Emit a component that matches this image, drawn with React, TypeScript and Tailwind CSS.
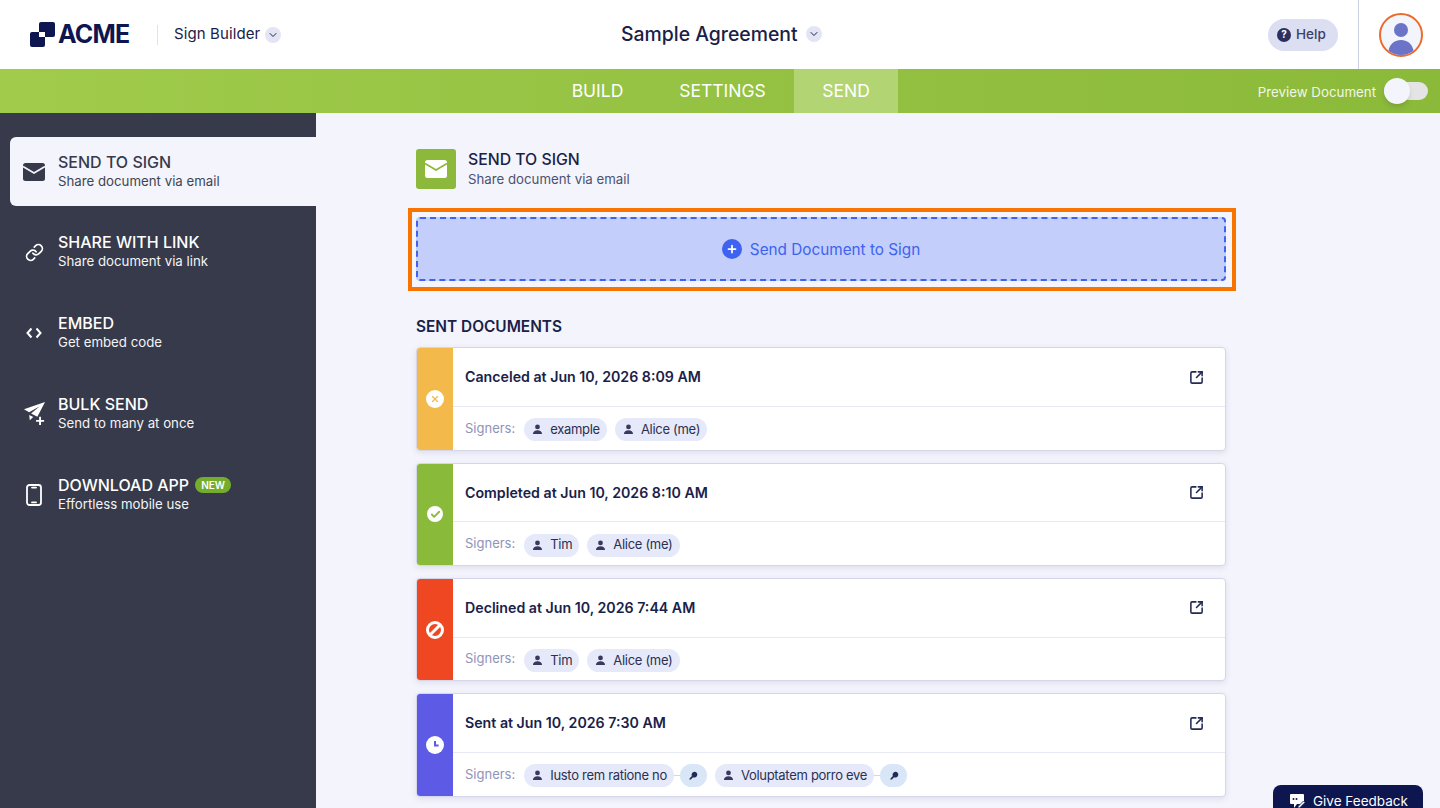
import { SquareArrowOutUpRight, Link as LinkIcon, ChevronDown, Check, X, Plus } from "lucide-react";
import type { ReactNode } from "react";

const font = { fontFamily: "Inter, 'Noto Sans', sans-serif" };

function MailIcon({ className, notch }: { className?: string; notch: string }) {
  return (
    <svg viewBox="0 0 22 18" className={className} preserveAspectRatio="none">
      <rect width="22" height="18" rx="2.5" fill="currentColor" />
      <path d="M0 3.5l11 6.5L22 3.5" fill="none" stroke={notch} strokeWidth="1.7" />
    </svg>
  );
}

function PlaneIcon({ className }: { className?: string }) {
  return (
    <svg viewBox="0 0 24 26" className={className} fill="currentColor">
      <path d="M23 1L1 8.5l5.4 3.2L17.5 5.5 8.4 13l6.6 3.4z" />
      <path d="M6.5 14.5l.6 5.5 3.6-3.4z" />
      <path d="M16.8 16.5h2v3.2H22v2h-3.2V25h-2v-3.3h-3.2v-2h3.2z" />
    </svg>
  );
}

function PhoneIcon({ className }: { className?: string }) {
  return (
    <svg viewBox="0 0 16 22" className={className} fill="none" stroke="currentColor" strokeWidth="1.8">
      <rect x="1" y="1" width="14" height="20" rx="2.5" />
      <path d="M6 3.6h4M6 18.4h4" strokeLinecap="round" />
    </svg>
  );
}

function PersonIcon() {
  return (
    <svg viewBox="0 0 12 12" className="h-[11px] w-[11px] shrink-0 text-[#363a5e]" fill="currentColor">
      <circle cx="6" cy="3.2" r="2.6" />
      <path d="M1 11c0-2.8 2.2-4.2 5-4.2s5 1.4 5 4.2z" />
    </svg>
  );
}

function KeyIcon() {
  return (
    <svg viewBox="0 0 12 12" className="h-[10px] w-[10px] text-[#232a55]" fill="currentColor">
      <path d="M7.6 1a3.4 3.4 0 1 1-1.5 6.4L3.4 10.2 1.8 10.4l.2-1.6 2.7-2.9A3.4 3.4 0 0 1 7.6 1z" />
    </svg>
  );
}

const sideItems: { title: string; sub: string; icon: ReactNode; badge?: boolean; active?: boolean }[] = [
  { title: "SEND TO SIGN", sub: "Share document via email", icon: <MailIcon className="h-[18px] w-[22px] text-[#363a4a]" notch="#f3f4fc" />, active: true },
  { title: "SHARE WITH LINK", sub: "Share document via link", icon: <LinkIcon className="h-[19px] w-[19px]" strokeWidth={2.2} /> },
  {
    title: "EMBED",
    sub: "Get embed code",
    icon: (
      <svg viewBox="0 0 16 12" className="h-3 w-4" fill="none" stroke="currentColor" strokeWidth="2">
        <path d="M5.5 1.5L1.5 6l4 4.5M10.5 1.5l4 4.5-4 4.5" />
      </svg>
    ),
  },
  { title: "BULK SEND", sub: "Send to many at once", icon: <PlaneIcon className="h-[25px] w-[23px]" /> },
  { title: "DOWNLOAD APP", sub: "Effortless mobile use", icon: <PhoneIcon className="h-[22px] w-4" />, badge: true },
];

type Signer = { name: string; key?: boolean };

const docs: { title: string; bar: string; icon: ReactNode; signers: Signer[] }[] = [
  {
    title: "Canceled at Jun 10, 2026 8:09 AM",
    bar: "bg-[#f4b94b]",
    icon: (
      <span className="flex h-[18px] w-[18px] items-center justify-center rounded-full bg-white">
        <X className="h-[10px] w-[10px] text-[#f4b94b]" strokeWidth={3} />
      </span>
    ),
    signers: [{ name: "example" }, { name: "Alice (me)" }],
  },
  {
    title: "Completed at Jun 10, 2026 8:10 AM",
    bar: "bg-[#8aba39]",
    icon: (
      <span className="flex h-4 w-4 items-center justify-center rounded-full bg-white">
        <Check className="h-[11px] w-[11px] text-[#8aba39]" strokeWidth={4} />
      </span>
    ),
    signers: [{ name: "Tim" }, { name: "Alice (me)" }],
  },
  {
    title: "Declined at Jun 10, 2026 7:44 AM",
    bar: "bg-[#f04723]",
    icon: (
      <svg viewBox="0 0 18 18" className="h-[18px] w-[18px]" fill="none" stroke="white" strokeWidth="3">
        <circle cx="9" cy="9" r="7.5" />
        <path d="M14 4L4 14" />
      </svg>
    ),
    signers: [{ name: "Tim" }, { name: "Alice (me)" }],
  },
  {
    title: "Sent at Jun 10, 2026 7:30 AM",
    bar: "bg-[#5d5be6]",
    icon: (
      <svg viewBox="0 0 18 18" className="h-[18px] w-[18px]">
        <circle cx="9" cy="9" r="9" fill="white" />
        <path d="M9 5v4.6h3.6" fill="none" stroke="#5d5be6" strokeWidth="2" />
      </svg>
    ),
    signers: [
      { name: "Iusto rem ratione no", key: true },
      { name: "Voluptatem porro eve", key: true },
    ],
  },
];

function SignerChip({ signer }: { signer: Signer }) {
  return (
    <div className="flex items-center">
      <span className="flex h-[23px] items-center gap-[7px] rounded-full bg-[#e6e9fa] pl-[8px] pr-[7px] text-[13px] tracking-[-0.3px] text-[#2a3050]">
        <PersonIcon />
        {signer.name}
      </span>
      {signer.key && (
        <>
          <span className="h-px w-[6px] bg-[#cfd8ee]" />
          <span className="flex h-[23px] w-[27px] items-center justify-center rounded-full bg-[#d8e6f7]">
            <KeyIcon />
          </span>
        </>
      )}
    </div>
  );
}

export default function App() {
  return (
    <div style={font} className="relative flex h-[808px] w-[1440px] flex-col overflow-hidden bg-[#f3f4fc] text-[#1a2148]">
      <header className="flex h-[69px] shrink-0 items-center bg-white">
        <div className="flex w-[621px] shrink-0 items-center pl-[30px]">
          <div className="flex w-[127px] items-center">
            <svg viewBox="0 0 25 25" className="h-[25px] w-[25px] shrink-0">
              <rect x="0" y="10" width="15" height="15" rx="2" fill="#0e1650" />
              <rect x="9" y="0" width="16" height="15" rx="2" fill="#0e1650" />
              <rect x="9" y="10" width="6" height="5" fill="white" />
            </svg>
            <span className="ml-[3px] text-[25px] font-bold leading-none tracking-[-0.8px] text-[#0e1650]">ACME</span>
          </div>
          <span className="h-5 w-px bg-[#e0e2f0]" />
          <span className="ml-4 text-[15px] tracking-[0.1px]">Sign Builder</span>
          <span className="ml-[5px] flex h-4 w-4 items-center justify-center rounded-full bg-[#e3e5f5]">
            <ChevronDown className="h-3 w-3" />
          </span>
        </div>
        <div className="flex items-center gap-2">
          <span className="text-[19.4px] font-medium">Sample Agreement</span>
          <span className="flex h-4 w-4 items-center justify-center rounded-full bg-[#e3e5f5]">
            <ChevronDown className="h-3 w-3" />
          </span>
        </div>
        <div className="flex h-full flex-1 items-center justify-end">
          <span className="flex h-8 w-[70px] items-center gap-[5px] rounded-full bg-[#dcdff2] pl-[9px] text-[13.5px] font-medium text-[#3b4068]">
            <span className="flex h-[14px] w-[14px] items-center justify-center rounded-full bg-[#2b3060] text-[10px] font-bold text-white">?</span>
            Help
          </span>
          <span className="ml-5 h-full w-px bg-[#ccd0e6]" />
          <div className="ml-5 mr-[17px] flex h-[44px] w-[44px] items-end justify-center overflow-hidden rounded-full border-2 border-[#ec6a2c] bg-[#f3f5fd]">
            <svg viewBox="0 0 40 40" className="h-[40px] w-[40px]" fill="#6b74c6">
              <circle cx="20" cy="15" r="7" />
              <path d="M7 40c0-10 6-15 13-15s13 5 13 15z" />
            </svg>
          </div>
        </div>
      </header>

      <nav className="flex h-11 shrink-0 bg-gradient-to-r from-[#a0cb4b] to-[#8bb93a] text-white">
        <div className="w-[544px] shrink-0" />
        <div className="flex text-[17.5px]">
          <span className="flex w-[107px] items-center justify-center">BUILD</span>
          <span className="flex w-[143px] items-center justify-center">SETTINGS</span>
          <span className="flex w-[104px] items-center justify-center bg-[#b2d472]">SEND</span>
        </div>
        <div className="flex flex-1 items-center justify-end pr-3">
          <span className="mr-2 mt-[3px] text-[13.3px] text-[#f3f6e6]">Preview Document</span>
          <span className="relative h-[18px] w-11 rounded-full bg-[#e4e4e4]">
            <span className="absolute -top-1 left-0 h-[26px] w-[26px] rounded-full bg-[#f3f4fc] shadow-md" />
          </span>
        </div>
      </nav>

      <div className="flex min-h-0 flex-1">
        <aside className="flex w-[316px] shrink-0 flex-col gap-[11.75px] bg-[#363a4a] pl-[10px] pt-6 text-white">
          {sideItems.map((item) => (
            <div
              key={item.title}
              className={
                item.active
                  ? "flex h-[69px] items-center rounded-l-md bg-[#f3f4fc] text-[#363a4a]"
                  : "flex h-[69px] items-center"
              }
            >
              <span className="flex w-[48px] justify-center">{item.icon}</span>
              <div className="pb-[1px]">
                <div className="flex items-center gap-[6px] text-[16px] font-medium leading-5">
                  {item.title}
                  {item.badge && (
                    <span className="flex h-4 w-9 items-center justify-center rounded-full bg-[#74ad2d] text-[10px] font-semibold">NEW</span>
                  )}
                </div>
                <div className="text-[13.25px] leading-[19px] opacity-95">{item.sub}</div>
              </div>
            </div>
          ))}
        </aside>

        <main className="min-w-0 flex-1 pl-[100px] pt-9">
          <div className="flex items-center gap-3">
            <span className="flex h-10 w-10 items-center justify-center rounded-[3px] bg-[#8cb83b]">
              <MailIcon className="h-[18px] w-[22px] text-white" notch="#8cb83b" />
            </span>
            <div>
              <div className="text-[15.8px] font-medium leading-5">SEND TO SIGN</div>
              <div className="text-[13.25px] leading-[19px] text-[#4c5170]">Share document via email</div>
            </div>
          </div>

          <div className="-ml-2 mt-[19px] w-[828px] border-4 border-[#f97300] pb-[6px] pl-1 pr-[6px] pt-[5px]">
            <button
              type="button"
              className="flex h-16 w-[810px] items-center justify-center gap-2 rounded border-2 border-dashed border-[#3d63f0] bg-[#c3cefa] text-[15.3px] text-[#3d63f0]"
            >
              <span className="flex h-5 w-5 items-center justify-center rounded-full bg-[#3d63f0]">
                <Plus className="h-3 w-3 text-white" strokeWidth={3.5} />
              </span>
              <span className="pt-[2px]">Send Document to Sign</span>
            </button>
          </div>

          <h2 className="mt-[26px] text-[15.4px] font-semibold leading-5">SENT DOCUMENTS</h2>

          <div className="mt-[10.3px] flex w-[810px] flex-col gap-3">
            {docs.map((doc) => (
              <div
                key={doc.title}
                className="flex h-[103.35px] overflow-hidden rounded border border-[#d5d7e8] bg-white shadow-[0_2px_6px_rgba(40,44,90,0.1)]"
              >
                <div className={`flex w-[36px] shrink-0 items-center justify-center ${doc.bar}`}>{doc.icon}</div>
                <div className="flex min-w-0 flex-1 flex-col">
                  <div className="flex h-[58.6px] shrink-0 items-center justify-between border-b border-[#e6e8f3] pl-3 pr-[21px]">
                    <span className="text-[14.2px] font-semibold">{doc.title}</span>
                    <SquareArrowOutUpRight className="h-[15px] w-[15px] text-[#232a55]" strokeWidth={2.5} />
                  </div>
                  <div className="flex flex-1 items-center gap-2 pl-3 pt-[3px]">
                    <span className="mb-[3px] mr-[1px] text-[13px] text-[#8f93b8]">Signers:</span>
                    {doc.signers.map((s) => (
                      <SignerChip key={s.name} signer={s} />
                    ))}
                  </div>
                </div>
              </div>
            ))}
          </div>
        </main>
      </div>

      <div className="absolute bottom-0 left-[1273px] flex h-[23px] w-[150px] items-start gap-2 rounded-t-lg bg-[#0e1650] pl-4 pt-[8px] text-[13.5px] leading-4 text-white">
        <svg viewBox="0 0 16 16" className="h-4 w-4 shrink-0" fill="white">
          <path d="M2 1h12a1 1 0 0 1 1 1v8a1 1 0 0 1-1 1H8l-3 4v-4H2a1 1 0 0 1-1-1V2a1 1 0 0 1 1-1z" />
          <circle cx="4.5" cy="6" r="1" fill="#0e1650" />
          <circle cx="7.5" cy="6" r="1" fill="#0e1650" />
          <path d="M9 13.5l5.5-5.5 1.5 1.5-5.5 5.5H9z" stroke="#0e1650" strokeWidth="0.8" />
        </svg>
        Give Feedback
      </div>
    </div>
  );
}
